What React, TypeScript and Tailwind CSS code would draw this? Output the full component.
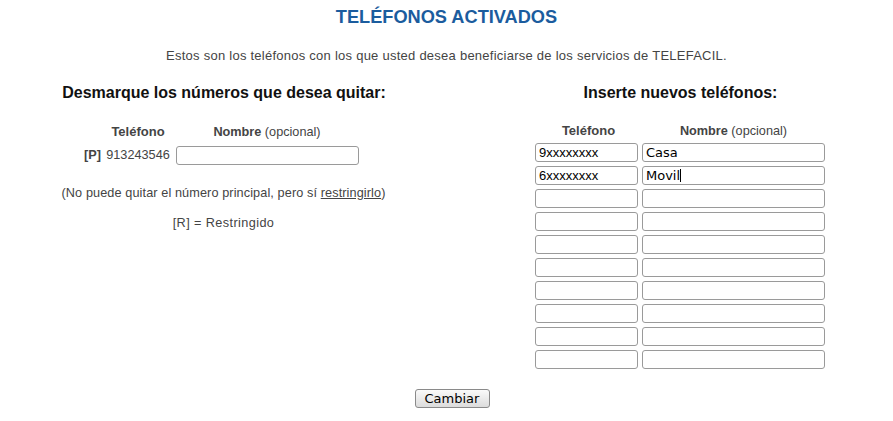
import React from 'react';

const sans = { fontFamily: '"Liberation Sans", Arial, sans-serif' };

const inputCls =
  'block h-[19px] border border-[#9a9a9a] rounded-[3px] bg-white px-[3px] outline-none text-[13px] text-black font-["DejaVu_Sans",sans-serif]';

const newRows = [
  { tel: '9xxxxxxxx', name: 'Casa' },
  { tel: '6xxxxxxxx', name: 'Movil' },
  { tel: '', name: '' },
  { tel: '', name: '' },
  { tel: '', name: '' },
  { tel: '', name: '' },
  { tel: '', name: '' },
  { tel: '', name: '' },
  { tel: '', name: '' },
  { tel: '', name: '' },
];

export default function App() {
  return (
    <div className="w-[893px] h-[421px] bg-white text-[12.7px] text-[#444] overflow-hidden" style={sans}>
      <h1 className="pt-[6px] text-center text-[18.2px] font-bold text-[#1b5c9e] leading-[22px]">
        TELÉFONOS ACTIVADOS
      </h1>
      <p className="mt-[21px] text-center text-[13px] tracking-[0.25px] leading-[14px]">
        Estos son los teléfonos con los que usted desea beneficiarse de los servicios de TELEFACIL.
      </p>

      <div className="flex mt-[21px]">
        {/* columna izquierda */}
        <div className="w-[448px] flex flex-col">
          <h2 className="text-center text-[16px] font-bold text-[#111] leading-[18px]">
            Desmarque los números que desea quitar:
          </h2>
          <div className="ml-[82px] mt-[23px] flex flex-col">
            <div className="flex leading-[14px]">
              <div className="w-[22px]" />
              <div className="w-[68px] text-center font-bold text-[13px]">Teléfono</div>
              <div className="w-[190px] text-center">
                <span className="font-bold">Nombre</span> (opcional)
              </div>
            </div>
            <div className="flex items-center mt-[7px]">
              <div className="w-[22px] text-right pr-[3px] font-bold">[P]</div>
              <div className="w-[68px] text-center">913243546</div>
              <div className="w-[190px]">
                <input className={`${inputCls} w-[183px] ml-[4px]`} defaultValue="" />
              </div>
            </div>
          </div>
          <p className="mt-[21px] text-center leading-[14px] pr-[1px] tracking-[0.1px]">
            (No puede quitar el número principal, pero sí <span className="underline">restringirlo</span>)
          </p>
          <p className="mt-[16px] text-center leading-[14px] pr-[1px] tracking-[0.4px]">[R] = Restringido</p>
        </div>

        {/* columna derecha */}
        <div className="w-[445px] pl-[20px] flex flex-col">
          <h2 className="text-center text-[16px] font-bold text-[#111] leading-[18px]">
            Inserte nuevos teléfonos:
          </h2>
          <div className="ml-[67px] mt-[22px] flex flex-col">
            <div className="flex leading-[14px]">
              <div className="w-[107px] text-center font-bold text-[13px]">Teléfono</div>
              <div className="w-[183px] text-center">
                <span className="font-bold">Nombre</span> (opcional)
              </div>
            </div>
            <div className="flex flex-col gap-[4px] mt-[5px]">
              {newRows.map((r, i) => (
                <div key={i} className="flex gap-[4px]">
                  <input
                    className={`${inputCls} w-[103px] text-[11px]`}
                    style={sans}
                    defaultValue={r.tel}
                  />
                  <div className="relative">
                    <input className={`${inputCls} w-[183px]`} defaultValue={r.name} />
                    {i === 1 && (
                      <span className="absolute left-[38px] top-[3px] w-px h-[13px] bg-black" />
                    )}
                  </div>
                </div>
              ))}
            </div>
          </div>
        </div>
      </div>

      <div className="flex justify-center mt-[20px] pl-[11px]">
        <button
          className="w-[75px] h-[19px] border border-[#8a8a8a] rounded-[3px] bg-gradient-to-b from-[#fafafa] to-[#dcdcdc] text-[13px] text-black leading-[15px] font-['DejaVu_Sans',sans-serif]"
        >
          Cambiar
        </button>
      </div>
    </div>
  );
}
